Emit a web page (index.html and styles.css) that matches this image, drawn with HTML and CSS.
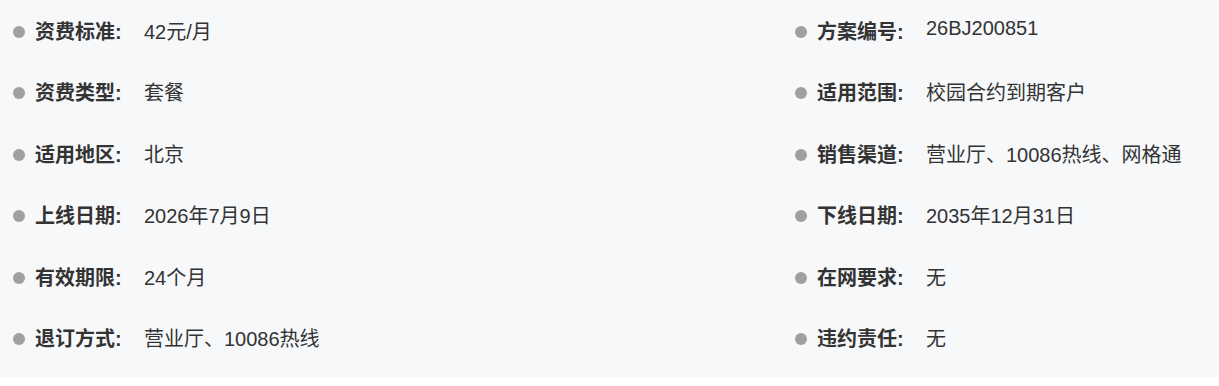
FILE: index.html
```html
<!DOCTYPE html>
<html lang="zh-CN">
<head>
<meta charset="utf-8">
<link rel="stylesheet" href="styles.css">
</head>
<body>
<div class="info">
  <div class="item"><span class="dot"></span><span class="label">资费标准:</span><span class="value">42元/月</span></div>
  <div class="item"><span class="dot"></span><span class="label">方案编号:</span><span class="value value-raised">26BJ200851</span></div>
  <div class="item"><span class="dot"></span><span class="label">资费类型:</span><span class="value">套餐</span></div>
  <div class="item"><span class="dot"></span><span class="label">适用范围:</span><span class="value">校园合约到期客户</span></div>
  <div class="item"><span class="dot"></span><span class="label">适用地区:</span><span class="value">北京</span></div>
  <div class="item"><span class="dot"></span><span class="label">销售渠道:</span><span class="value">营业厅、10086热线、网格通</span></div>
  <div class="item"><span class="dot"></span><span class="label">上线日期:</span><span class="value">2026年7月9日</span></div>
  <div class="item"><span class="dot"></span><span class="label">下线日期:</span><span class="value">2035年12月31日</span></div>
  <div class="item"><span class="dot"></span><span class="label">有效期限:</span><span class="value">24个月</span></div>
  <div class="item"><span class="dot"></span><span class="label">在网要求:</span><span class="value">无</span></div>
  <div class="item"><span class="dot"></span><span class="label">退订方式:</span><span class="value">营业厅、10086热线</span></div>
  <div class="item"><span class="dot"></span><span class="label">违约责任:</span><span class="value">无</span></div>
</div>
</body>
</html>
```
FILE: styles.css
```css
html, body {
  margin: 0;
  padding: 0;
  background: #ffffff;
}
.info {
  background: #f7f8fa;
  display: grid;
  grid-template-columns: 782px 1fr;
  row-gap: 31.4px;
  padding: 17px 0 23px 13px;
  font-family: "Liberation Sans", "Noto Sans CJK SC", sans-serif;
  font-size: 20px;
  color: #333333;
}
.item {
  display: flex;
  align-items: center;
  height: 30px;
  line-height: 30px;
}
.dot {
  width: 12px;
  height: 12px;
  border-radius: 50%;
  background: #a0a0a0;
  flex: none;
  margin-right: 10px;
}
.label {
  width: 109px;
  flex: none;
  font-weight: bold;
  color: #333333;
}
.value {
  color: #333333;
}
.value-raised {
  margin-bottom: 8px;
}
```
